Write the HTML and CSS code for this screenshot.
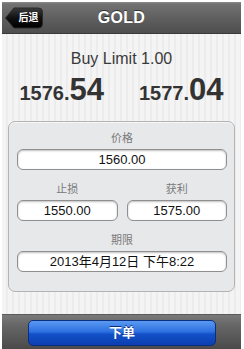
FILE: index.html
```html
<!DOCTYPE html>
<html>
<head>
<meta charset="utf-8">
<link rel="stylesheet" href="styles.css">
</head>
<body>
<div class="screen">
  <div class="navbar">
    <div class="back">
      <svg class="back-shape" width="38" height="22" viewBox="0 0 38 22">
        <defs>
          <linearGradient id="bg" x1="0" y1="0" x2="0" y2="1">
            <stop offset="0" stop-color="#3a3a3a"/>
            <stop offset="0.5" stop-color="#111"/>
            <stop offset="1" stop-color="#000"/>
          </linearGradient>
        </defs>
        <path d="M0.5 11 L9 1 H33.5 Q37.5 1 37.5 5 V17 Q37.5 21 33.5 21 H9 Z" fill="url(#bg)" stroke="#2a2a2a" stroke-width="1"/>
      </svg>
      <span class="back-text">后退</span>
    </div>
    <div class="title">GOLD</div>
  </div>
  <div class="content">
    <div class="order-title">Buy Limit 1.00</div>
    <div class="prices">
      <div class="price"><span class="small">1576.</span><span class="big">54</span></div>
      <div class="price"><span class="small">1577.</span><span class="big">04</span></div>
    </div>
    <div class="panel">
      <div class="label">价格</div>
      <div class="field">1560.00</div>
      <div class="pair">
        <div class="col">
          <div class="label gap">止损</div>
          <div class="field">1550.00</div>
        </div>
        <div class="col">
          <div class="label gap">获利</div>
          <div class="field">1575.00</div>
        </div>
      </div>
      <div class="label gap">期限</div>
      <div class="field">2013年4月12日 下午8:22</div>
    </div>
  </div>
  <div class="toolbar">
    <div class="submit">下单</div>
  </div>
</div>
</body>
</html>
```

FILE: styles.css
```css
html, body {
  margin: 0;
  padding: 0;
  background: #ffffff;
}
body {
  font-family: "Liberation Sans", "Noto Sans CJK SC", Arial, sans-serif;
}
.screen {
  margin: 2px 3px 0 2px;
  width: 239px;
  height: 347px;
  display: flex;
  flex-direction: column;
  overflow: hidden;
}
.navbar {
  height: 32px;
  flex: none;
  position: relative;
  display: flex;
  align-items: center;
  justify-content: center;
  background: linear-gradient(#8c8c8c 0, #727272 2px, #606060 50%, #4e4e4e 100%);
  border-bottom: 1px solid #3a3a3a;
  box-sizing: border-box;
}
.title {
  color: #ffffff;
  font-weight: bold;
  font-size: 16px;
  text-shadow: 0 -1px 0 #333;
  letter-spacing: 0.3px;
}
.back {
  position: absolute;
  left: 3px;
  top: 5px;
  width: 38px;
  height: 22px;
}
.back-shape {
  display: block;
}
.back-text {
  position: absolute;
  left: 10px;
  top: 0;
  width: 27px;
  height: 22px;
  line-height: 22px;
  text-align: center;
  color: #fff;
  font-size: 10px;
  font-weight: bold;
}
.content {
  flex: 1;
  background: repeating-linear-gradient(90deg, #f4f4f4 0, #f4f4f4 4px, #ececec 4px, #ececec 6px);
  padding: 15px 6px 0 6px;
}
.order-title {
  text-align: center;
  color: #3a3a3a;
  font-size: 16px;
  line-height: 20px;
}
.prices {
  display: flex;
  margin: 10px -6px 0 -6px;
  height: 30px;
  align-items: flex-end;
}
.price {
  flex: 1;
  text-align: center;
  color: #333;
  font-weight: bold;
  line-height: 28px;
}
.price .small {
  font-size: 20px;
}
.price .big {
  font-size: 31px;
}
.panel {
  margin-top: 12px;
  background: #e7e8ea;
  border: 1px solid #b3b3b3;
  border-radius: 7px;
  padding: 5px 7px 19px 8px;
  box-shadow: inset 0 1px 0 #f6f6f6;
}
.label {
  height: 22px;
  line-height: 22px;
  text-align: center;
  color: #7a7a7a;
  font-size: 11px;
}
.label.gap {
  margin-top: 8px;
}
.field {
  height: 21px;
  box-sizing: border-box;
  background: #ffffff;
  border: 1px solid #8f8f8f;
  border-radius: 6px;
  box-shadow: inset 0 1px 2px rgba(0,0,0,0.25);
  text-align: center;
  line-height: 19px;
  font-size: 13px;
  color: #111;
}
.pair {
  display: flex;
  gap: 9px;
}
.col {
  flex: 1;
}
.toolbar {
  height: 35px;
  flex: none;
  background: linear-gradient(#7a7a7a 0, #666 30%, #4a4a4a 100%);
  border-top: 1px solid #5a5a5a;
  box-sizing: border-box;
  padding: 5px 25px 0 26px;
}
.submit {
  height: 26px;
  border-radius: 5px;
  background: linear-gradient(#5a9af2 0, #2c6fe0 45%, #1350c8 55%, #0c3fb0 100%);
  border: 1px solid #0a2f80;
  box-sizing: border-box;
  color: #fff;
  text-align: center;
  line-height: 24px;
  font-size: 13px;
  font-weight: bold;
  text-shadow: 0 -1px 0 #0a2f80;
}
```
